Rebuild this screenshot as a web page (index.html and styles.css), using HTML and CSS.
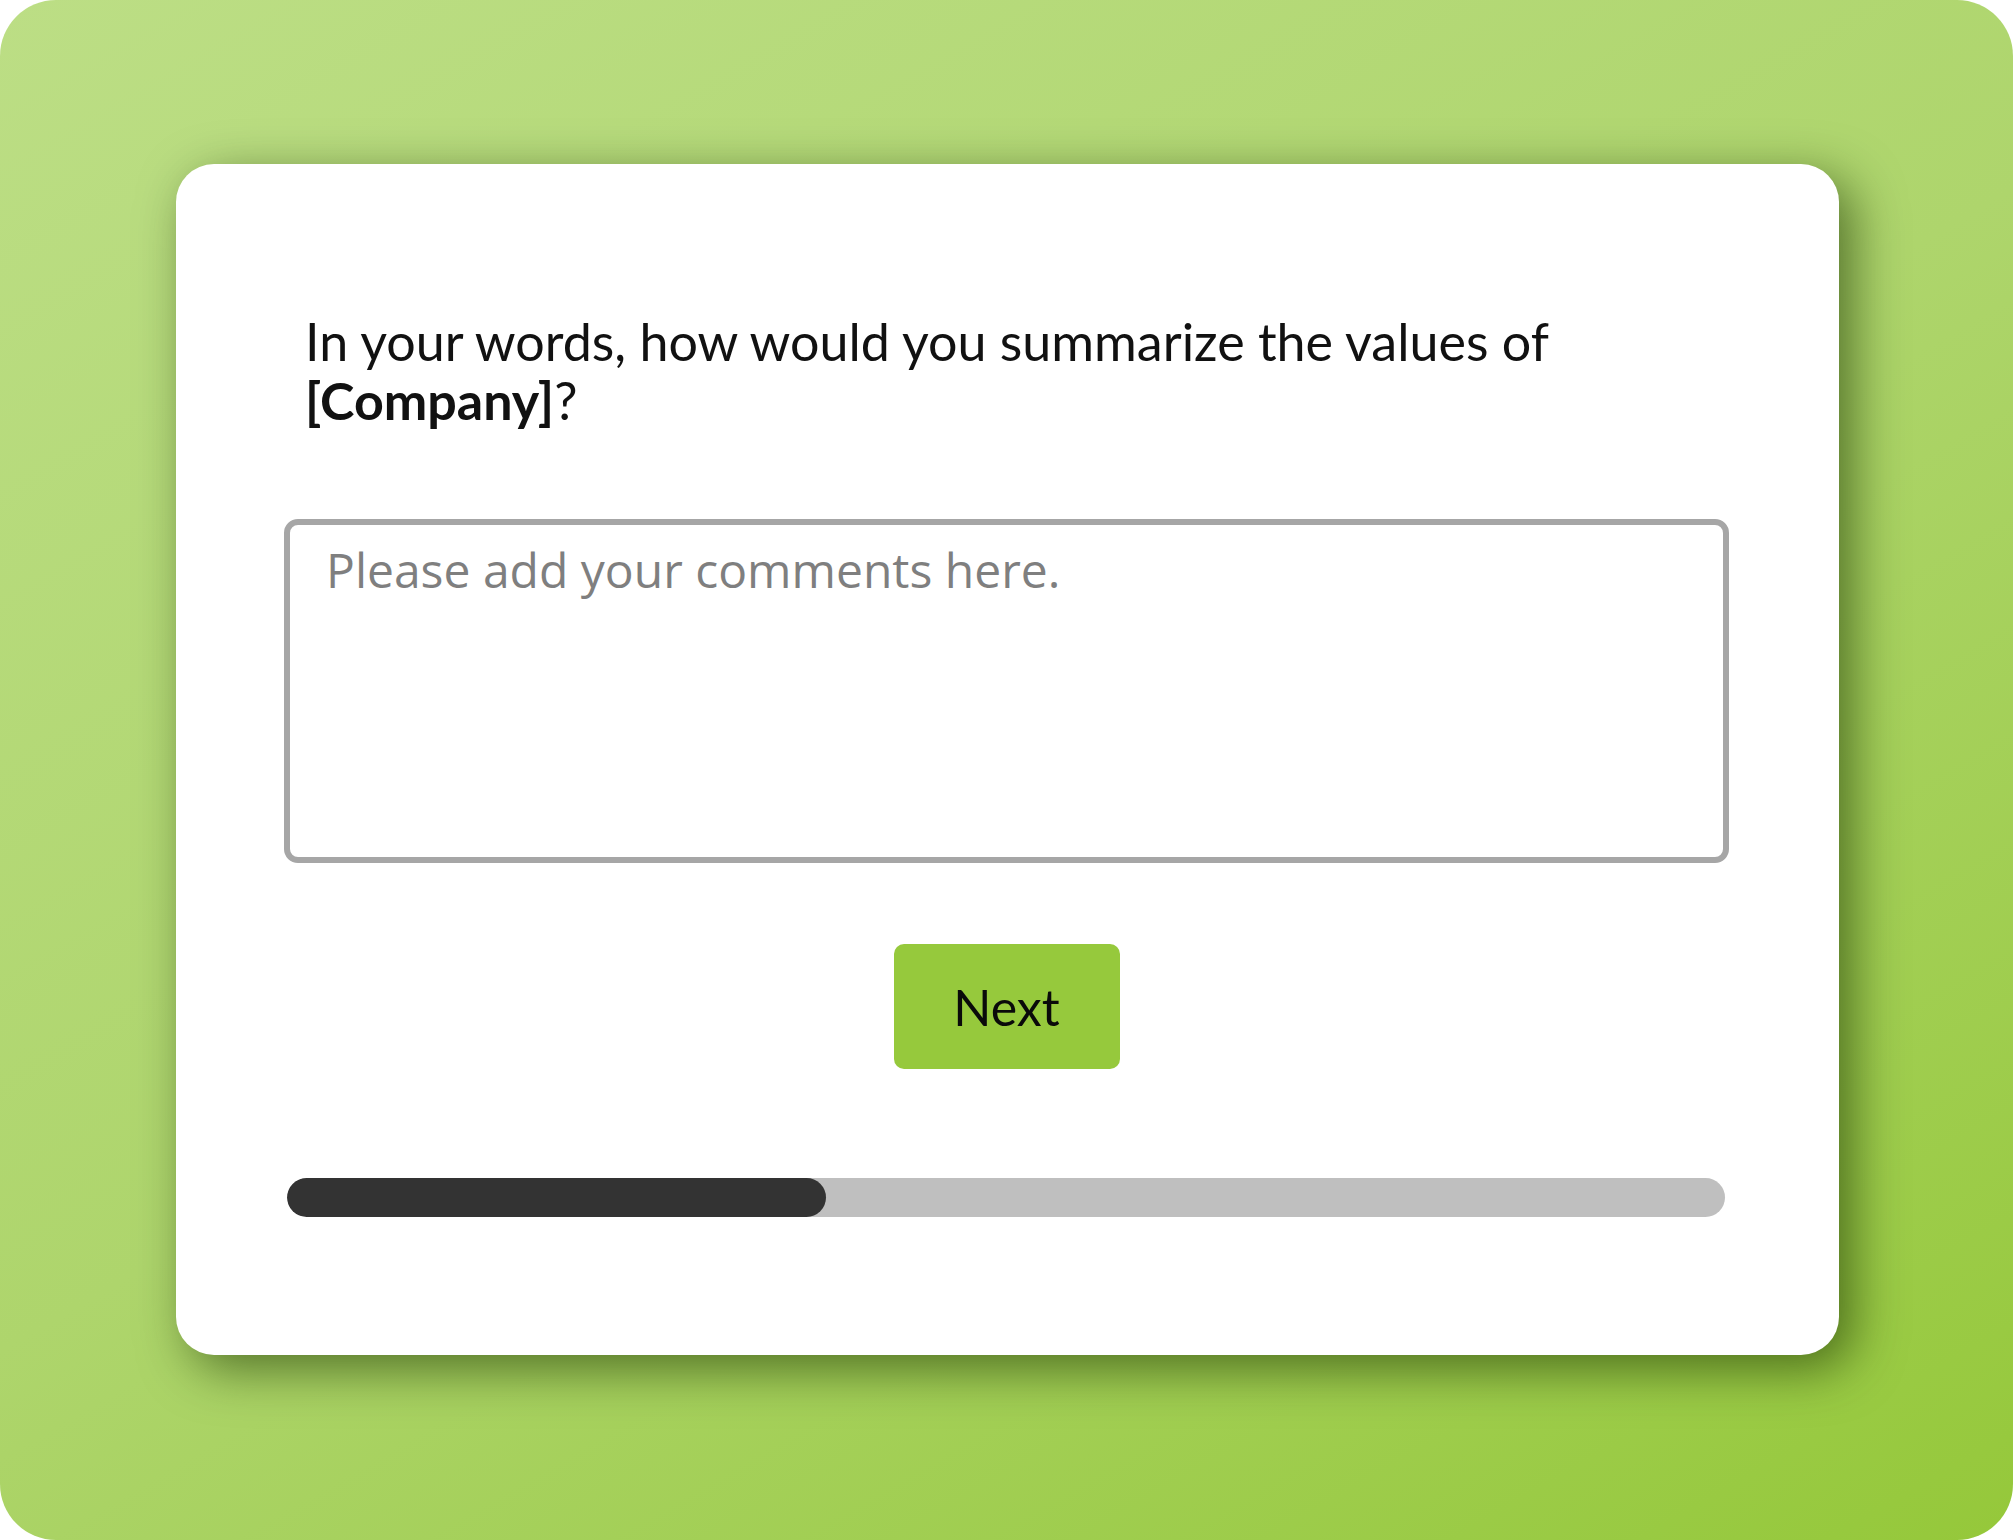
FILE: index.html
```html
<!DOCTYPE html>
<html lang="en">
<head>
<meta charset="utf-8">
<title>Survey question</title>
<link rel="stylesheet" href="styles.css">
</head>
<body>
<div class="stage">
  <section class="card">
    <p class="question">In your words, how would you summarize the values of <strong>[Company]</strong>?</p>
    <textarea class="answer" placeholder="Please add your comments here."></textarea>
    <div class="actions">
      <button class="next" type="button">Next</button>
    </div>
    <div class="progress"><div class="progress-fill" style="width: 37.5%"></div></div>
  </section>
</div>
</body>
</html>
```

FILE: styles.css
```css
* { box-sizing: border-box; }

html, body {
  margin: 0;
  padding: 0;
  background: #ffffff;
}

body {
  font-family: Lato, "Open Sans", "Liberation Sans", sans-serif;
  width: 2013px;
  height: 1540px;
  overflow: hidden;
}

.stage {
  width: 2013px;
  height: 1540px;
  border-radius: 56px;
  background: linear-gradient(150deg, #bcde85 0%, #aed56c 50%, #95c83a 100%);
  padding: 164px 174px 185px 176px;
}

.card {
  width: 1663px;
  height: 1191px;
  background: #ffffff;
  border-radius: 38px;
  padding: 148px 110px 138px 108px;
  display: flex;
  flex-direction: column;
  box-shadow: 14px 14px 50px rgba(25, 50, 0, 0.6);
}

.question {
  margin: 0 0 0 21px;
  font-size: 52px;
  line-height: 59px;
  color: #111111;
  font-weight: 400;
  height: 207px;
  flex: none;
}

.question strong { font-weight: 700; }

.answer {
  display: block;
  flex: none;
  width: 1445px;
  height: 344px;
  border: 6px solid #a6a6a6;
  border-radius: 14px;
  padding: 17px 36px;
  font-family: "Open Sans", Lato, sans-serif;
  font-size: 48px;
  line-height: 56px;
  color: #333333;
  resize: none;
  outline: none;
  background: #ffffff;
}

.answer::placeholder {
  color: #7f7f7f;
  opacity: 1;
}

.actions {
  display: flex;
  justify-content: center;
  margin-top: 81px;
}

.next {
  width: 226px;
  height: 125px;
  border: none;
  border-radius: 10px;
  background: #96c93c;
  color: #0a0a0a;
  font-family: inherit;
  font-size: 50px;
  padding: 0;
  cursor: pointer;
}

.progress {
  margin-top: 109px;
  margin-left: 3px;
  width: 1438px;
  height: 39px;
  border-radius: 20px;
  background: #bfbfbf;
  overflow: hidden;
}

.progress-fill {
  height: 100%;
  border-radius: 20px;
  background: #333333;
}
```
